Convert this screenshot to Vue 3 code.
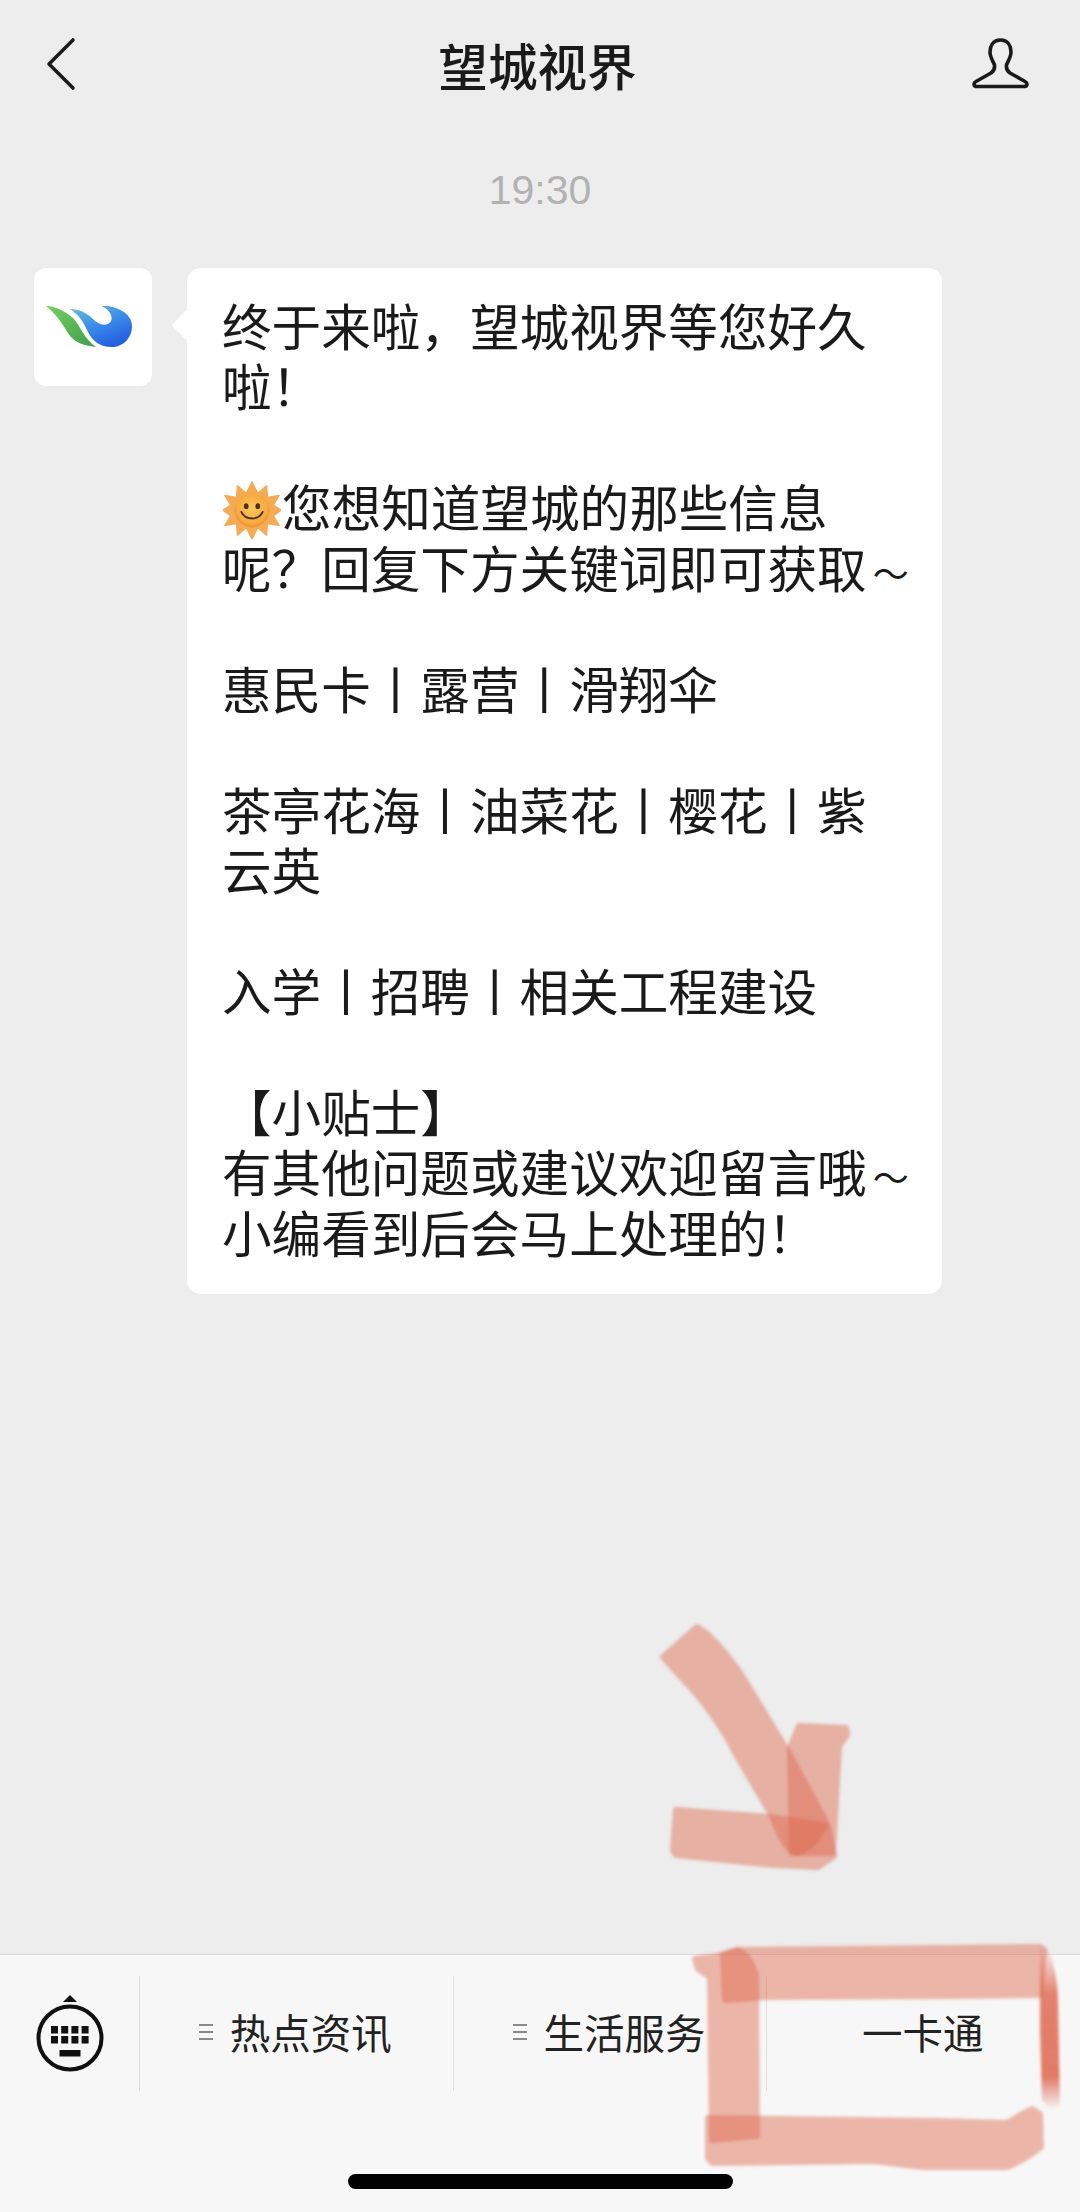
<template>
  <div class="chat-page">
    <header class="nav-bar">
      <svg class="nav-icon back-icon" width="40" height="60" viewBox="0 0 40 60">
        <path d="M33 6 L9 30 L33 54" fill="none" stroke="#1a1a1a" stroke-width="3.6" stroke-linecap="round" stroke-linejoin="round" />
      </svg>
      <h1 class="nav-title">望城视界</h1>
      <svg class="nav-icon user-icon" width="60" height="56" viewBox="0 0 60 56">
        <path d="M30.5 4 C23 4 20 10 20 16 C20 21 23 25 24.5 29 C25 33 24 35 21 37 L6 45.5 C3 47 3.5 50.5 7 50.5 L54 50.5 C57.5 50.5 58 47 55 45.5 L40 37 C37 35 36 33 36.5 29 C38 25 41 21 41 16 C41 10 38 4 30.5 4 Z" fill="none" stroke="#1a1a1a" stroke-width="3.6" stroke-linejoin="round" />
      </svg>
    </header>

    <div class="time-label">19:30</div>

    <div class="msg-row">
      <div class="avatar">
        <svg class="logo" width="86" height="42" viewBox="0 0 86 42">
          <defs>
            <linearGradient id="leafGrad" x1="0" y1="0" x2="1" y2="1">
              <stop offset="0" stop-color="#74d060" />
              <stop offset="1" stop-color="#3f9e4a" />
            </linearGradient>
            <linearGradient id="waveGrad" x1="0" y1="0" x2="0.6" y2="1">
              <stop offset="0" stop-color="#6cc0d8" />
              <stop offset="0.55" stop-color="#3a8aea" />
              <stop offset="1" stop-color="#2460e0" />
            </linearGradient>
          </defs>
          <path d="M0 0 C8 0 18 4 27 12 C34 19 38 33 50 41 C40 40 30 37 25 31 C19 24 15 12 0 0 Z" fill="url(#leafGrad)" />
          <path d="M24 3 C33 3 41 7 47 13 C51 17 56 20 62 18 C68 15 67 6 56 0 C68 -1 86 6 86 20 C86 33 76 41 66 41 C54 41 46 35 41 24 C37 15 32 8 24 3 Z" fill="url(#waveGrad)" />
        </svg>
      </div>
      <div class="bubble">
        终于来啦，望城视界等您好久<br />
        啦！<br />
        <br />
        <svg class="sun" width="58" height="58" viewBox="0 0 60 60">
          <defs>
            <radialGradient id="faceGrad" cx="0.5" cy="0.45" r="0.55">
              <stop offset="0" stop-color="#fbc65e" />
              <stop offset="0.8" stop-color="#f6aa3e" />
              <stop offset="1" stop-color="#e98f2e" />
            </radialGradient>
          </defs>
          <path
            d="M30 1 L36 13 L45 5 L46 17 L58 15 L52 25 L60 30 L52 36 L58 46 L46 44 L45 56 L36 48 L30 60 L24 48 L15 56 L14 44 L2 46 L8 36 L0 30 L8 25 L2 15 L14 17 L15 5 L24 13 Z"
            fill="#f5ab55" stroke="#f5ab55" stroke-width="1.5" stroke-linejoin="round"
          />
          <circle cx="30" cy="30" r="18" fill="url(#faceGrad)" />
          <ellipse cx="24" cy="26" rx="2.4" ry="3" fill="#4a3212" />
          <ellipse cx="36" cy="26" rx="2.4" ry="3" fill="#4a3212" />
          <path d="M19 32 C23 41 37 41 41 32" fill="none" stroke="#4a3212" stroke-width="2" stroke-linecap="round" />
        </svg>您想知道望城的那些信息<br />
        呢？回复下方关键词即可获取<span class="tilde">～</span><br />
        <br />
        惠民卡丨露营丨滑翔伞<br />
        <br />
        茶亭花海丨油菜花丨樱花丨紫<br />
        云英<br />
        <br />
        入学丨招聘丨相关工程建设<br />
        <br />
        【小贴士】<br />
        有其他问题或建议欢迎留言哦<span class="tilde">～</span><br />
        小编看到后会马上处理的！
      </div>
    </div>

    <div class="spacer"></div>

    <footer class="bottom-bar">
      <div class="menu-row">
        <div class="kb-cell">
          <svg width="70" height="80" viewBox="0 0 70 80">
            <path d="M28 8 L35 1 L42 8 Z" fill="#111" />
            <circle cx="35" cy="44" r="31.5" fill="none" stroke="#111" stroke-width="4" />
            <g fill="#111">
              <rect v-for="k in keys" :key="k.id" :x="k.x" :y="k.y" width="7" height="7.5" />
              <rect x="24.5" y="56" width="21" height="6.5" />
            </g>
          </svg>
        </div>
        <div v-for="item in menus" :key="item.label" class="menu-item">
          <span v-if="item.lines" class="menu-lines"><i></i><i></i><i></i></span>
          <span>{{ item.label }}</span>
        </div>
      </div>
      <div class="home-bar"></div>
    </footer>

    <!-- hand-drawn red marks on top of the screenshot -->
    <svg class="marks" width="1080" height="2212" viewBox="0 0 1080 2212">
      <defs>
        <linearGradient id="sideGrad" x1="0" y1="0" x2="0" y2="1">
          <stop offset="0" stop-color="#dc5a40" stop-opacity="0" />
          <stop offset="0.3" stop-color="#dc5a40" stop-opacity="0.75" />
          <stop offset="0.8" stop-color="#dc5a40" stop-opacity="0.8" />
          <stop offset="1" stop-color="#dc5a40" stop-opacity="0" />
        </linearGradient>
        <filter id="soft"><feGaussianBlur stdDeviation="1.4" /></filter>
      </defs>
      <g filter="url(#soft)">
        <path class="stroke" d="M799 1726 L846 1728 L847 1735 L839 1746 L833 1853 L792 1853 L790 1748 Z" />
        <path class="stroke" d="M676 1810 L770 1817 L828 1826 L834 1856 L818 1867 L773 1865 L676 1855 L673 1850 Z" />
        <path class="stroke" d="M663 1657 L697 1627 L705 1632 Q730 1655 747 1684 L787 1750 L826 1822 Q815 1848 797 1853 Q785 1852 772 1816 L737 1756 Q715 1712 680 1676 Z" />
        <path class="stroke" d="M723 1955 L737 1950 L1040 1947 L1044 1950 L1040 1995 L957 1996 L767 1997 L725 2000 Z" />
        <path class="stroke" d="M695 1959 L717 1956 L737 1950 Q750 1955 756 1975 L757 2136 L712 2140 L710 1977 L698 1969 Z" />
        <path class="stroke" d="M708 2118 L940 2121 L1007 2123 Q1020 2115 1032 2109 L1040 2114 L1041 2147 Q1025 2160 1007 2167 L923 2167 L873 2161 L712 2163 L708 2158 Z" />
        <path d="M1040 1944 L1048 1948 Q1058 1975 1058 2000 L1060 2106 L1050 2110 L1042 2100 L1040 2030 Z" fill="url(#sideGrad)" />
      </g>
    </svg>
  </div>
</template>

<script setup>
const menus = [
  { label: '热点资讯', lines: true },
  { label: '生活服务', lines: true },
  { label: '一卡通', lines: false },
]

// keyboard icon keys: two rows of four
const keys = []
for (let r = 0; r < 2; r++) {
  for (let c = 0; c < 4; c++) {
    keys.push({ id: r + '-' + c, x: 16 + c * 10.2, y: 32 + r * 10 })
  }
}
</script>

<style>
html, body { margin: 0; padding: 0; }
</style>

<style scoped>
.chat-page { position: relative; width: 1080px; height: 2212px; overflow: hidden; display: flex; flex-direction: column; background: #ededed; color: #1a1a1a; font-family: "Noto Sans CJK SC", "Noto Sans", sans-serif; }
.nav-bar { height: 128px; padding: 0 50px 0 40px; display: grid; grid-template-columns: 1fr auto 1fr; align-items: center; box-sizing: border-box; flex-shrink: 0; }
.nav-icon { display: block; }
.user-icon { justify-self: end; }
.nav-title { margin: 0 0 0 5px; font-size: 49.6px; font-weight: 500; line-height: 60px; }
.time-label { margin-top: 32px; text-align: center; font-family: "Liberation Sans", Arial, sans-serif; font-size: 41px; line-height: 60px; color: #b2b2b2; }
.msg-row { margin-top: 48px; padding-left: 34px; display: flex; align-items: flex-start; gap: 35px; }
.avatar { width: 118px; height: 118px; border-radius: 12px; background: #fff; display: flex; align-items: center; justify-content: center; flex-shrink: 0; }
.logo { margin-right: 8px; overflow: visible; }
.bubble { position: relative; width: 755px; box-sizing: border-box; padding: 26px 0 33px 35px; border-radius: 14px; background: #fff; font-size: 49.6px; line-height: 60.45px; white-space: nowrap; }
.bubble::before { content: ""; position: absolute; left: -11px; top: 46px; width: 22px; height: 22px; background: #fff; transform: rotate(45deg); border-radius: 3px; }
.sun { display: inline-block; vertical-align: middle; margin: -20px 1px -12px 1px; }
.tilde { font-size: 36px; line-height: 0; margin-left: 6px; }
.spacer { flex: 1; }
.bottom-bar { height: 258px; background: #f7f7f7; border-top: 1px solid #dcdcdc; box-sizing: border-box; padding-top: 21px; display: flex; flex-direction: column; flex-shrink: 0; }
.menu-row { height: 115px; display: flex; }
.kb-cell { width: 139px; display: flex; align-items: center; justify-content: center; box-sizing: border-box; flex-shrink: 0; }
.menu-item { flex: 1; border-left: 1px solid #e0e0e0; display: flex; align-items: center; justify-content: center; gap: 17px; padding: 0 2px 4px 0; box-sizing: border-box; font-size: 40.5px; line-height: 60px; color: #222; }
.menu-lines { display: flex; flex-direction: column; gap: 5px; width: 14px; }
.menu-lines i { display: block; height: 2px; background: #8a8a8a; }
.home-bar { width: 385px; height: 15px; margin: 83px auto 0; border-radius: 8px; background: #000; }
.marks { position: absolute; left: 0; top: 0; pointer-events: none; }
.stroke { fill: #dc5f45; stroke: #dc5f45; stroke-width: 6; stroke-linejoin: round; opacity: 0.43; }
</style>
